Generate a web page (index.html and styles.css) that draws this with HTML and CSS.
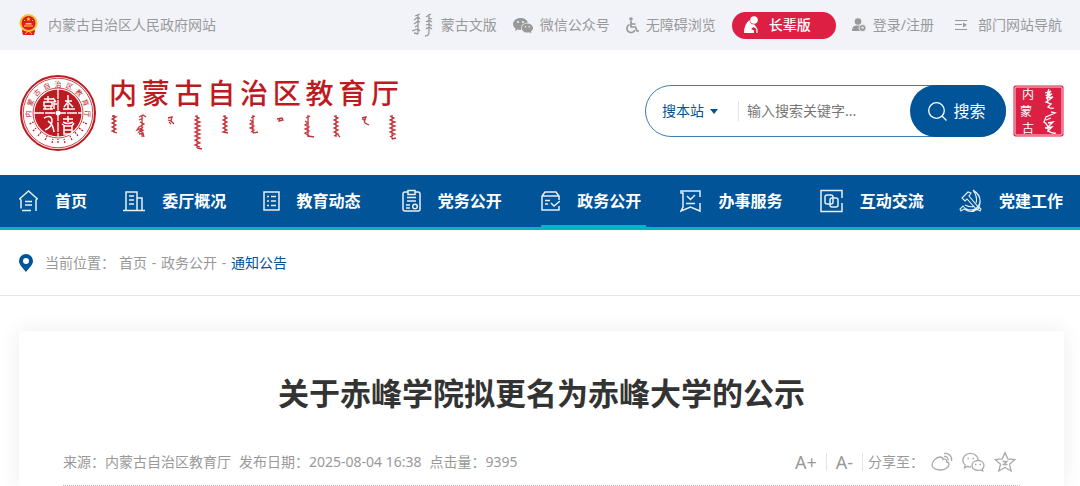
FILE: index.html
```html
<!DOCTYPE html>
<html lang="zh-CN">
<head>
<meta charset="utf-8">
<meta name="viewport" content="width=device-width, initial-scale=1">
<title>关于赤峰学院拟更名为赤峰大学的公示</title>
<link rel="stylesheet" href="styles.css">
</head>
<body>
<div class="topbar">
	<div class="wrap">
		<a href="#" class="gov">
			<svg width="19" height="22" viewBox="0 0 19 22"><path d="M4 14h11l1 3-1 4H4l-1-4z" fill="#d9201a"/><circle cx="9.500" cy="9" r="9" fill="#f3c32d"/><circle cx="9.500" cy="9" r="7" fill="#e01b1f"/><path d="M9.500 3l.6 1.300 1.400.2-1 1 .2 1.400-1.200-.7-1.200.7.2-1.400-1-1 1.400-.2zM5 11.500h9v1H5zM7 9h5l1 1.500H6zM5 6h1v1H5zM13 6h1v1h-1z" fill="#f8d648"/><path d="M3 15q6.500 4 13 0M6 20l3.500-3L13 20" fill="none" stroke="#f3c32d"/></svg>
			<span>内蒙古自治区人民政府网站</span>
		</a>
		<ul class="top_menu">
			<li><a href="#">
				<svg width="22" height="24" viewBox="0 0 22 24" fill="none" stroke="#999" stroke-width="1.300"><path d="M6 1v20M3 3l5-2M2 7l4-3 2 2M2 11l4-3 2 1M3 14l3-2M0 18l6-2 2 2M2 20l4 1M17 1v18q0 4-4 4M14 4l5-3M17 5l3 1M14 9l3-2 3 2M14 12l3-1 3 2M14 16l3-2 3 2"/></svg>
				<span>蒙古文版</span></a></li>
			<li><a href="#">
				<svg width="20" height="17" viewBox="0 0 20 17" fill="#999"><path d="M7.500 1C3.300 1 0 3.700 0 7c0 1.900 1 3.500 2.700 4.600L2 14l2.700-1.400c.9.300 1.800.4 2.800.4h.6A6 6 0 0 1 8 11c0-3 3-5.300 6.800-5.300C14.300 3 11.300 1 7.500 1z"/><path d="M20 11c0-2.600-2.600-4.500-5.700-4.500S8.600 8.500 8.600 11s2.500 4.600 5.700 4.600c.7 0 1.400-.1 2-.3l2.200 1.200-.6-2C19.200 13.700 20 12.400 20 11z"/><g fill="#f2f3f9"><circle cx="5" cy="5" r="1"/><circle cx="10" cy="5" r="1"/><circle cx="12.500" cy="9.700" r=".8"/><circle cx="16.200" cy="9.700" r=".8"/></g></svg>
				<span>微信公众号</span></a></li>
			<li><a href="#">
				<svg width="13" height="17" viewBox="0 0 13 17" fill="none" stroke="#999" stroke-width="1.700"><circle cx="5" cy="2" r="1.800" fill="#999" stroke="none"/><path d="M5 4v6h4.500l1.500 4h2M5 7h4.500M3.500 7.500A4.200 4.200 0 1 0 9 13"/></svg>
				<span>无障碍浏览</span></a></li>
			<li><a href="#" class="elder">
				<svg width="14" height="18" viewBox="0 0 14 18" fill="#fff"><circle cx="10" cy="4" r="3.800"/><path d="M5.500 4q.5 4.500 5 4.500l3 4.500v4h-1.200v-4l-2.800-2L7 13l3 1.500V17H0Q0 8 5.500 4z"/></svg>
				<span>长辈版</span></a></li>
			<li><a href="#">
				<svg width="14" height="14" viewBox="0 0 14 14"><circle cx="6" cy="3.500" r="3.300" fill="#999"/><path d="M0 13c0-4 2-5.500 5-5.500h4V13z" fill="#999"/><circle cx="10.500" cy="10" r="3.500" fill="#999" stroke="#f2f3f9" stroke-width=".8"/><path d="M9 10h3M10.500 8.500V10" stroke="#f2f3f9"/></svg>
				<span>登录/注册</span></a></li>
			<li class="guide"><a href="#">
				<svg width="13" height="12" viewBox="0 0 13 12" fill="none" stroke="#999"><path d="M0 1.500h12M0 5.500h7M0 10.500h12"/><path d="M8 3.500l4 2.500-4 2.500z" fill="#999" stroke="none"/></svg>
				<span>部门网站导航</span></a></li>
		</ul>
	</div>
</div>

<header class="header">
	<div class="wrap">
		<a href="#" class="logo">
			<svg class="seal" width="78" height="78" viewBox="0 0 78 78">
				<defs><path id="ring" d="M13.500 48.500A27 27 0 1 1 64.500 48.500"/></defs>
				<g fill="none" stroke="#bd1a21"><circle cx="39" cy="39" r="37" stroke-width="2"/><circle cx="39" cy="39" r="34.800" stroke-width=".8"/><circle cx="39" cy="39" r="25" stroke-width=".8"/></g>
				<circle cx="39" cy="39" r="23.500" fill="#bd1a21"/>
				<text class="ring_text"><textPath href="#ring" startOffset="50%" text-anchor="middle">内&#160; 蒙&#160; 古&#160; 自&#160; 治&#160; 区&#160; 教&#160; 育&#160; 厅</textPath></text>
				<path d="M10.500 50l4-2M14 57l3-3M19 62l3-4M26 66l2-4M33 69l1-4M39 69v-4M46 69l-1-4M53 66l-2-4M59 62l-3-4M64 57l-4-3M68 50l-4-2" stroke="#bd1a21" stroke-width="1.200" stroke-dasharray="2 1"/>
				<path d="M39 15v48M15 39h48" stroke="#fff" stroke-width="1.300" stroke-dasharray="10 1"/>
				<circle cx="39" cy="39" r="2.500" fill="#fff"/>
				<g fill="none" stroke="#fff" stroke-width="1.500">
					<path d="M25 25h9M29 22v6M25 28h8v4h-8zM24 35h10M26 32v3M32 32v3M34 24l3 4M35 27v8M35 30h3"/>
					<path d="M49 21v7l-4 5M49 28l5 5M46 27h7M44 35h12M49 30v5"/>
					<path d="M25 44q8-4 8 3 0 6-7 9M29 47q5 3 6 11"/>
					<path d="M44 45h10M49 42v6M44 48q5 3 10 0M45 52h8v8h-8zM45 56h8M43 50l3 2M55 49l-2 3"/>
				</g>
			</svg>
			<span class="logo_name">
				<span class="logo_cn"><b>内</b><b>蒙</b><b>古</b><b>自</b><b>治</b><b>区</b><b>教</b><b>育</b><b>厅</b></span>
				<svg width="290" height="38" viewBox="0 0 290 38" fill="none" stroke="#c4353b" stroke-width="1.300">
					<path d="M5 1v18M3 2l4 1-4 2 4 2-4 2 4 2-4 2 4 2-4 2 5 2"/>
					<path d="M33 1v22M30 3l4-2 3 2M30 6l4-2M31 8l4 2-5 3-2 3 5-2-3 4 5-2M30 20l4-1 1 4"/>
					<path d="M59 4l4-1-1 4-3-1M61 6l4 4M62 10l-2-2"/>
					<path d="M88 1v33M86 2l4 2-4 2 5 2-5 2 5 2-5 2 5 2-5 2 5 2-5 2 5 2-5 2 5 3-5 2 5 2M88 34l5 1"/>
					<path d="M116 1v18M114 2l4 2-4 2 4 2-4 2 4 2-4 2 4 2-4 2 5 1"/>
					<path d="M144 1v18M142 4l4-2M141 6l3 2-3 2 4 2-4 2 4 2-3 2M144 19l5-1"/>
					<path d="M168 5l5-1 1 2-4 1 1-3"/>
					<path d="M199 1v22M197 4l4-2M196 7l3 2-3 2 4 2-4 2 4 2-4 2 4 3M199 22l6 1"/>
					<path d="M227 1v22M225 2l4 2-4 2 4 2-4 2 4 2-4 2 4 2-4 2 4 2-4 2M229 21l2 2"/>
					<path d="M253 4l4-1-1 3-3-1M255 6l1 3 4 2"/>
					<path d="M283 1v24M281 2l4 2-4 2 5 2-5 2 5 2-5 2 5 2-5 2 5 2-5 3M283 25l4-1"/>
				</svg>
			</span>
		</a>
		<div class="search_area">
			<form class="search">
				<label class="scope"><select aria-label="搜索范围"><option>搜本站</option></select><i></i></label>
				<input type="text" aria-label="搜索关键字" placeholder="输入搜索关键字...">
				<button type="button">
					<svg width="19" height="19" viewBox="0 0 19 19" fill="none" stroke="#fff" stroke-width="1.300"><circle cx="8.500" cy="8.500" r="7.800"/><path d="M14 14l4.500 4.500"/></svg>
					<span>搜索</span>
				</button>
			</form>
			<svg class="stamp" width="51" height="52" viewBox="0 0 51 52">
				<rect x=".5" y=".5" width="50" height="51" rx="2" fill="#dc1f43"/>
				<rect x="2" y="2" width="47" height="48" rx="1" fill="none" stroke="#fff" stroke-width=".8"/>
				<g class="stamp_text"><text x="9" y="14">内</text><text x="7" y="31">蒙</text><text x="9" y="48">古</text></g>
				<path d="M36 4q-3 6-1 14M32 8l6-2-4 4 5-1-6 4 7-1-7 5 5 2-3 3q3 2 6 1M38 27l4 1-9 4-2 5q5 3 4 10M33 35l5-2M35 38l5-1-5 5M32 43l7-1-4 4q5 3 8 2" fill="none" stroke="#fff" stroke-width="1.300"/>
			</svg>
		</div>
	</div>
</header>

<nav class="nav">
	<ul class="wrap">
		<li><a href="#">
			<svg width="19" height="22" viewBox="0 0 19 22"><path d="M3 20.500h9M2 18.500V10L.8 8.700 9.500 1l8.700 7.700-1.200 1.300v11M6 11.500h7M6 15h7"/></svg>
			<span>首页</span></a></li>
		<li><a href="#">
			<svg width="22" height="22" viewBox="0 0 22 22"><path d="M0 20.500h22M3 20V2h11v18M14 8h5v12M6 6h5M6 10h5M6 14h5"/></svg>
			<span>委厅概况</span></a></li>
		<li><a href="#">
			<svg width="17" height="22" viewBox="0 0 17 22"><path d="M1 2h15v18H1zM4 6.500h2M8 6.500h5M4 11h2M8 11h5M4 15.500h2M8 15.500h5"/></svg>
			<span>教育动态</span></a></li>
		<li><a href="#">
			<svg width="19" height="24" viewBox="0 0 19 24"><path d="M6 3H3Q1 3 1 5v15q0 2 2 2h13q2 0 2-2V5q0-2-2-2h-3M6 1.500h7v4H6zM5 8.500h9M5 12h9M4 16h4M4 19h4"/><circle cx="13" cy="17.500" r="2.300"/></svg>
			<span>党务公开</span></a></li>
		<li class="on"><a href="#">
			<svg width="19" height="22" viewBox="0 0 19 22"><path d="M1 6l3-4h11l3 4v4M1 6h17M1 6v14h17v-4M4 10.500h5M4 14h3M10 13l3 3 6-5"/></svg>
			<span>政务公开</span></a></li>
		<li><a href="#">
			<svg width="21" height="24" viewBox="0 0 21 24"><path d="M20 8V2H1v2h2v14l-2 4 9.500-4 9.500 4v-8M7 7l3.500 3.500L15 6M6 14.500h9"/></svg>
			<span>办事服务</span></a></li>
		<li><a href="#">
			<svg width="23" height="24" viewBox="0 0 23 24"><path d="M22 9V1.500H1v21h21V14"/><rect x="5" y="6" width="8" height="9" rx="2"/><rect x="10" y="9" width="8" height="9" rx="2"/></svg>
			<span>互动交流</span></a></li>
		<li><a href="#">
			<svg width="23" height="24" viewBox="0 0 23 24" class="thin"><path d="M3 9l6-6 3 1-2 3 10 12-2 2L8 10l-2 2zM14 1q8 5 7 12-2 8-9 8-5 0-8-4l-3 3 1 2 3-2q8 5 13 0l3 2 1-2-2-2q4-10-6-17zM14 1q5 7 3 13M6 16q6 3 9 1"/></svg>
			<span>党建工作</span></a></li>
	</ul>
</nav>

<div class="location">
	<div class="wrap">
		<svg width="14" height="18" viewBox="0 0 14 18"><path d="M7 0a7 7 0 0 1 7 7c0 4-4 7-7 11C4 14 0 11 0 7a7 7 0 0 1 7-7z" fill="#015498"/><circle cx="7" cy="7" r="3" fill="#fff"/></svg>
		<span class="label">当前位置：</span>
		<p><a href="#">首页</a><i>-</i><a href="#">政务公开</a><i>-</i><a href="#" class="current">通知公告</a></p>
	</div>
</div>

<main class="wrap">
	<article class="article">
		<h1>关于赤峰学院拟更名为赤峰大学的公示</h1>
		<div class="info">
			<div class="meta">
				<span>来源：内蒙古自治区教育厅</span>
				<span>发布日期：2025-08-04 16:38</span>
				<span>点击量：9395</span>
			</div>
			<div class="tools">
				<button type="button" class="size">A+</button>
				<button type="button" class="size">A-</button>
				<span>分享至：</span>
				<a href="#" aria-label="微博"><svg width="22" height="20" viewBox="0 0 22 20"><path d="M9 5C5 5 1 10 1 13c0 3 4 5 8.500 5S18 15 18 12.500c0-1.500-1-2.500-2.500-2.500.5-2-.5-3.500-3.500-2.500C12 6 11 5 9 5zM13 4.500c3-.5 4.500 1.500 4 4M13 1.500c5-1 8.500 3 7.500 7.500"/></svg></a>
				<a href="#" aria-label="微信"><svg width="23" height="20" viewBox="0 0 23 20"><path d="M9 15q-2 0-3.500-.7L2.500 16l.7-3C0 10.500.2 6.500 2.500 4c3-3.500 9-3.500 12 0q1.500 1.500 1.700 4"/><path d="M16 8.500c3.500 0 6 2.200 6 5 0 1.500-.7 2.700-1.800 3.600l.5 1.900-2.200-1c-4 1.300-8.500-.7-8.500-4.500 0-2.800 2.500-5 6-5z"/><path d="M5.500 6.500h1.500M10.500 6.500h1.500M13 12.500h1.500M17.500 12.500h1.500"/></svg></a>
				<a href="#" aria-label="收藏"><svg width="22" height="22" viewBox="0 0 22 22"><path d="M11 1.500l2.700 6.300 7.300.7-5.500 4.800L17.200 20 11 16.500 4.800 20l1.700-6.700L1 8.500l7.300-.7zM8.500 10.500h4.500l-3.500 3h4"/></svg></a>
			</div>
		</div>
	</article>
</main>
</body>
</html>
```

FILE: styles.css
```css
* {margin:0; padding:0; box-sizing:border-box}
li {list-style:none}
a {color:inherit; text-decoration:none}
svg {display:block; flex:none}
button, input, select {font:inherit; border:0; background:none; outline:0}
body {
	font-family:"Noto Sans", "Noto Sans CJK SC", sans-serif;
	font-size:14px;
	line-height:20px;
	color:#999;
	background-color:#fff;
}
.wrap {
	padding:0 16px 0 19px;
}

/* top bar */
.topbar {background-color:#f2f3f9}
.topbar .wrap {
	display:flex;
	align-items:center;
	justify-content:space-between;
	height:50px;
	padding-right:18px;
}
.gov {
	display:flex;
	align-items:center;
	gap:10px;
}
.top_menu {
	display:flex;
	align-items:center;
	gap:16px;
}
.top_menu a {
	display:flex;
	align-items:center;
	gap:7px;
	white-space:nowrap;
}
.top_menu .guide {margin-left:5px}
.top_menu .guide a {gap:10px}
.top_menu .elder {
	gap:11px;
	height:27px;
	padding:0 25px 0 12px;
	border-radius:14px;
	background-color:#dc1f43;
	color:#fff;
	font-weight:500;
}

/* header */
.header .wrap {
	display:flex;
	align-items:center;
	justify-content:space-between;
	height:125px;
}
.logo {
	display:flex;
	align-items:center;
	gap:12px;
}
.ring_text {
	font-size:7px;
	fill:#bd1a21;
}
.logo_cn {
	display:flex;
	justify-content:space-between;
	margin-bottom:2px;
	font-size:28px;
	line-height:38px;
	color:#bd1a21;
}
.logo_cn b {font-weight:500}
.search_area {
	display:flex;
	align-items:center;
	gap:7px;
	padding-bottom:3px;
}
.search {
	display:flex;
	align-items:center;
	height:52px;
	border:1px solid #3e7db2;
	border-radius:26px;
}
.scope {
	display:flex;
	align-items:center;
	gap:6px;
	padding:0 20px 0 16px;
	border-right:1px solid #e4e4e4;
	color:#015498;
}
.scope select {
	appearance:none;
	color:#015498;
}
.scope i {
	border:4px solid transparent;
	border-top:5px solid #015498;
	border-bottom:0;
}
.search input {
	width:171px;
	padding-left:8px;
}
.search input::placeholder {color:#777}
.search button {
	display:flex;
	align-items:center;
	justify-content:center;
	gap:6px;
	width:96px;
	height:52px;
	margin-right:-1px;
	padding-right:2px;
	border-radius:26px;
	background-color:#015498;
	color:#fff;
	font-size:16px;
}
.stamp_text {
	font-size:12px;
	fill:#fff;
}

/* nav */
.nav {
	background-color:#015498;
	border-bottom:3px solid #00b7bf;
}
.nav ul {
	display:flex;
	justify-content:space-between;
}
.nav li {min-width:105px}
.nav li:first-child {min-width:70px}
.nav a {
	display:flex;
	align-items:center;
	gap:17px;
	height:52px;
	border-top:2px solid transparent;
	border-bottom:2px solid transparent;
	color:#fff;
	font-size:16px;
	font-weight:bold;
	white-space:nowrap;
}
.nav .on a {border-bottom-color:#00b7bf}
.nav svg {
	fill:none;
	stroke:#e5eef5;
	stroke-width:1.5;
}
.nav svg.thin {stroke-width:1.1}

/* location */
.location {border-bottom:1px solid #e5e6ea}
.location .wrap {
	display:flex;
	align-items:center;
	height:65px;
}
.location .label {margin:0 4px 0 12px}
.location p {
	display:flex;
	gap:4px;
}
.location i {
	width:6px;
	font-style:normal;
	text-align:center;
}
.location .current {color:#015498}

/* article */
.article {
	margin-top:35px;
	padding:39px 44px 0;
	background-color:#fff;
	box-shadow:0 0 20px rgba(0,0,0,.08);
}
.article h1 {
	color:#333;
	font-size:31px;
	line-height:46px;
	text-align:center;
}
.info {
	display:flex;
	align-items:center;
	justify-content:space-between;
	margin-top:23px;
	height:47px;
	border-bottom:1px dotted #bbb;
}
.meta {
	display:flex;
	gap:8px;
}
.tools {
	display:flex;
	align-items:center;
	gap:9px;
	padding-right:4px;
}
.tools .size {
	padding-right:9px;
	border-right:1px solid #e4e4e4;
	color:#999;
	font-size:18px;
	line-height:18px;
}
.tools .size + span {margin:0 -2px 0 -4px}
.tools svg {
	fill:none;
	stroke:#aaa;
	stroke-width:1.3;
}
```
